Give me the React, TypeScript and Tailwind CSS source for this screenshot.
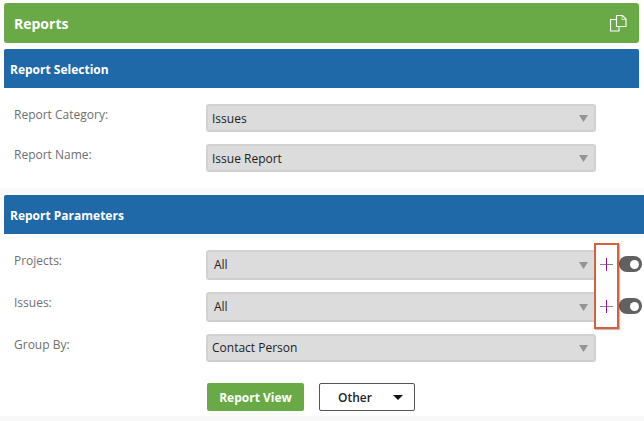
const font = "font-['Open_Sans',sans-serif]";

function Caret() {
  return (
    <svg width="9" height="7" viewBox="0 0 9 7">
      <path d="M0 0h9L4.5 7z" fill="#949494" />
    </svg>
  );
}

function Select({ value, tall = false, low = false }: { value: string; tall?: boolean; low?: boolean }) {
  return (
    <div
      className={`flex w-[390px] items-center justify-between rounded-[3px] border-2 border-[#d2d2d2] border-b-[#cfcfcf] bg-[#dcdcdc] pr-[6px] text-[12px] text-[#222] ${
        tall ? "h-[30px] pl-[6px]" : "h-[28px] pl-[4px]"
      }`}
    >
      <span className={low ? "pt-[1px]" : ""}>{value}</span>
      <Caret />
    </div>
  );
}

function Toggle() {
  return (
    <div className="flex h-[16px] w-[23px] shrink-0 items-center justify-end rounded-full bg-[#616161] pr-[3px]">
      <div className="h-[9px] w-[9px] rounded-full bg-white" />
    </div>
  );
}

function Plus() {
  return (
    <svg width="13" height="13" viewBox="0 0 13 13" className="ml-[4px] mr-[6px] shrink-0">
      <path d="M0 6.5h13" stroke="#8d7f8d" strokeWidth="1" />
      <path d="M6.5 0v13" stroke="#8a1a90" strokeWidth="1" />
    </svg>
  );
}

function Row({
  label,
  value,
  tall,
  low,
  extras,
}: {
  label: string;
  value: string;
  tall?: boolean;
  low?: boolean;
  extras?: boolean;
}) {
  return (
    <div className="flex items-start">
      <div className="w-[202px] shrink-0 pl-[10px] pt-[2px] text-[12px] leading-[18px] text-[#6f6f6f]">{label}</div>
      <Select value={value} tall={tall} low={low} />
      {extras && (
        <div className="flex h-[28px] items-center">
          <Plus />
          <Toggle />
        </div>
      )}
    </div>
  );
}

function SectionHeader({ title, className = "" }: { title: string; className?: string }) {
  return (
    <div className={`flex h-[39px] items-center bg-[#1f69a8] pl-[6px] pt-[2px] text-[12px] font-bold text-white ${className}`}>
      {title}
    </div>
  );
}

export default function App() {
  return (
    <div className={`${font} relative h-[421px] w-[644px] overflow-hidden bg-white pt-[3px]`}>
      {/* top bar */}
      <div className="ml-[4px] flex h-[40px] w-[635px] items-center justify-between rounded-[3px] bg-[#69aa46] pl-[10px] pr-[12px]">
        <span className="text-[14px] font-bold text-white">Reports</span>
        <svg width="18" height="17" viewBox="0 0 18 17" fill="none" stroke="white" strokeWidth="1.1">
          <path d="M7.5 4.5H1.5v11.5h8.5v-4.5" />
          <path d="M7.5 0.5h6l3.5 3.5v7.5H7.5z" />
          <path d="M13 0.5v4h4" strokeWidth="0.7" />
        </svg>
      </div>

      {/* report selection */}
      <div className="ml-[4px] mt-[6px] w-[635px] bg-white">
        <SectionHeader title="Report Selection" className="rounded-t-[2px]" />
        <div className="flex h-[100px] flex-col gap-[12px] pt-[16px]">
          <Row label="Report Category:" value="Issues" low />
          <Row label="Report Name:" value="Issue Report" low />
        </div>
      </div>

      <div className="h-[7px] bg-[#fafafa]" />

      {/* report parameters */}
      <div className="ml-[4px] bg-white">
        <SectionHeader title="Report Parameters" className="rounded-tl-[2px]" />
        <div className="flex flex-col gap-[12px] pt-[16px]">
          <Row label="Projects:" value="All" tall extras />
          <Row label="Issues:" value="All" tall extras />
          <Row label="Group By:" value="Contact Person" />
        </div>
        <div className="ml-[203px] mt-[21px] flex h-[33px] gap-[15px]">
          <button className="h-[28px] w-[97px] rounded-[2px] bg-[#69aa46] pt-[1px] text-[12px] font-bold text-white">
            Report View
          </button>
          <button className="flex h-[28px] w-[96px] items-center rounded-[2px] border border-[#555] bg-white pl-[18px] pt-[1px] text-[12px] font-semibold text-[#222]">
            <span>Other</span>
            <svg width="10" height="5" viewBox="0 0 10 5" className="ml-[21px]">
              <path d="M0 0h10L5 5z" fill="#111" />
            </svg>
          </button>
        </div>
      </div>
      <div className="h-[6px] bg-[#f8f8f8]" />

      {/* annotation box */}
      <div className="absolute left-[594px] top-[243px] h-[86px] w-[25px] border-2 border-[#d65f3e] shadow-[1px_1px_1px_rgba(0,0,0,0.25)]" />
    </div>
  );
}
